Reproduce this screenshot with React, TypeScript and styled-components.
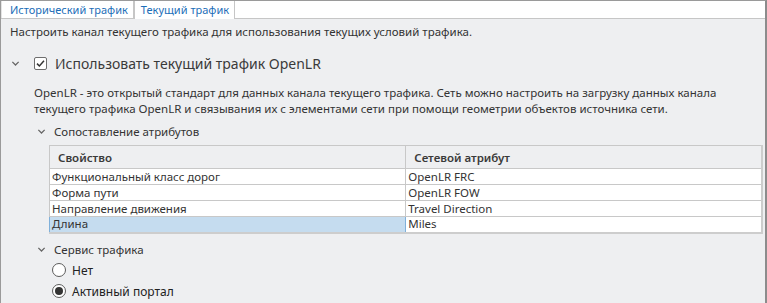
import React, { useState } from 'react';
import styled, { createGlobalStyle } from 'styled-components';

const GlobalStyle = createGlobalStyle`
  html, body {
    margin: 0;
    padding: 0;
    background: #eeeff1;
  }
  * {
    box-sizing: border-box;
  }
`;

const Frame = styled.div`
  width: 767px;
  height: 303px;
  overflow: hidden;
  background: #eeeff1;
  border-top: 1px solid #9a9a9a;
  border-left: 1px solid #9a9a9a;
  border-right: 2px solid #8c8c8c;
  font-family: 'Noto Sans', 'Open Sans', sans-serif;
  font-size: 11.5px;
  color: #333;
`;

const TabStrip = styled.div`
  display: flex;
  height: 18px;
  background: #fff;
  border-bottom: 1px solid #c6c6c6;
`;

const Tab = styled.div<{ active?: boolean }>`
  height: ${p => (p.active ? '18px' : '17px')};
  padding: 0 5px 0 ${p => (p.active ? '6px' : '8px')};
  line-height: 17px;
  font-size: 11px;
  color: #1c6eb8;
  background: #fff;
  border-left: 1px solid ${p => (p.active ? '#c6c6c6' : '#e4e4e4')};
  border-right: 1px solid #c6c6c6;
  white-space: nowrap;
`;

const Content = styled.div`
  padding: 5px 0 0 9px;
`;

const Intro = styled.div`
  line-height: 16px;
`;

const SectionHeader = styled.div`
  display: flex;
  align-items: center;
  margin-top: 14px;
  height: 18px;
`;

const Chevron = styled.span`
  display: inline-flex;
  width: 10px;
  height: 10px;
  align-items: center;
  justify-content: center;
`;

const CheckBox = styled.span`
  display: inline-flex;
  align-items: center;
  justify-content: center;
  width: 13px;
  height: 13px;
  margin-left: 14px;
  border: 1px solid #6e6e6e;
  border-radius: 2px;
  background: #fff;
`;

const BigLabel = styled.span`
  margin-left: 8px;
  font-size: 14px;
  color: #3a3a3a;
`;

const Body = styled.div`
  padding-left: 24px;
  margin-top: 13px;
`;

const Paragraph = styled.div`
  line-height: 16px;
  white-space: nowrap;
`;

const SubHeader = styled.div<{ gap: number }>`
  display: flex;
  align-items: center;
  margin-top: ${p => p.gap}px;
  height: 16px;
  padding-left: 3px;
`;

const SubLabel = styled.span`
  margin-left: 8px;
`;

const Table = styled.table`
  margin: 6px 0 0 15px;
  width: 714px;
  border-collapse: collapse;
  background: #fff;
  border: 2px solid #cdcdcd;
  border-top-width: 1px;
  border-left-width: 1px;
`;

const HeadCell = styled.th`
  text-align: left;
  font-weight: 600;
  height: 23px;
  padding: 0 0 0 8px;
  background: #eeeff1;
  border: 1px solid #c8c8c8;
  color: #3a3a3a;
`;

const Cell = styled.td<{ selected?: boolean }>`
  height: 16px;
  padding: 0 0 0 2px;
  line-height: 14px;
  border: 1px solid ${p => (p.selected ? '#7fb0da' : '#c8c8c8')};
  background: ${p => (p.selected ? '#c5dcef' : '#fff')};
  width: 50%;
`;

const RadioGroup = styled.div`
  margin-top: 2px;
`;

const RadioRow = styled.label`
  display: flex;
  align-items: center;
  height: 21px;
  padding-left: 18px;
`;

const RadioCircle = styled.span<{ checked?: boolean }>`
  display: inline-flex;
  align-items: center;
  justify-content: center;
  width: 14px;
  height: 14px;
  border-radius: 50%;
  border: 1px solid #5c5c5c;
  background: #fff;
  &::after {
    content: '';
    display: ${p => (p.checked ? 'block' : 'none')};
    width: 8px;
    height: 8px;
    border-radius: 50%;
    background: #333;
  }
`;

const RadioText = styled.span`
  margin-left: 6px;
  font-size: 12px;
  color: #222;
`;

const ChevronDown = ({ size = 9 }: { size?: number }) => (
  <svg width={size} height={size} viewBox="0 0 10 10">
    <path d="M1.5 3.2 L5 6.7 L8.5 3.2" fill="none" stroke="#666" strokeWidth="1.4" />
  </svg>
);

const rows = [
  { prop: 'Функциональный класс дорог', attr: 'OpenLR FRC' },
  { prop: 'Форма пути', attr: 'OpenLR FOW' },
  { prop: 'Направление движения', attr: 'Travel Direction' },
  { prop: 'Длина', attr: 'Miles' },
];

const App: React.FC = () => {
  const [service, setService] = useState('portal');

  return (
    <Frame>
      <GlobalStyle />
      <TabStrip>
        <Tab>Исторический трафик</Tab>
        <Tab active>Текущий трафик</Tab>
      </TabStrip>
      <Content>
        <Intro>Настроить канал текущего трафика для использования текущих условий трафика.</Intro>
        <SectionHeader>
          <Chevron>
            <ChevronDown />
          </Chevron>
          <CheckBox>
            <svg width="11" height="11" viewBox="0 0 11 11">
              <path d="M2 5.6 L4.4 8 L9 2.8" fill="none" stroke="#333" strokeWidth="1.5" />
            </svg>
          </CheckBox>
          <BigLabel>Использовать текущий трафик OpenLR</BigLabel>
        </SectionHeader>
        <Body>
          <Paragraph>
            OpenLR - это открытый стандарт для данных канала текущего трафика. Сеть можно настроить на загрузку данных канала
            <br />
            текущего трафика OpenLR и связывания их с элементами сети при помощи геометрии объектов источника сети.
          </Paragraph>
          <SubHeader gap={6}>
            <ChevronDown />
            <SubLabel>Сопоставление атрибутов</SubLabel>
          </SubHeader>
          <Table>
            <thead>
              <tr>
                <HeadCell>Свойство</HeadCell>
                <HeadCell>Сетевой атрибут</HeadCell>
              </tr>
            </thead>
            <tbody>
              {rows.map((r, i) => (
                <tr key={r.prop}>
                  <Cell selected={i === rows.length - 1}>{r.prop}</Cell>
                  <Cell>{r.attr}</Cell>
                </tr>
              ))}
            </tbody>
          </Table>
          <SubHeader gap={8}>
            <ChevronDown />
            <SubLabel>Сервис трафика</SubLabel>
          </SubHeader>
          <RadioGroup>
            <RadioRow onClick={() => setService('none')}>
              <RadioCircle checked={service === 'none'} />
              <RadioText>Нет</RadioText>
            </RadioRow>
            <RadioRow onClick={() => setService('portal')}>
              <RadioCircle checked={service === 'portal'} />
              <RadioText>Активный портал</RadioText>
            </RadioRow>
          </RadioGroup>
        </Body>
      </Content>
    </Frame>
  );
};

export default App;
